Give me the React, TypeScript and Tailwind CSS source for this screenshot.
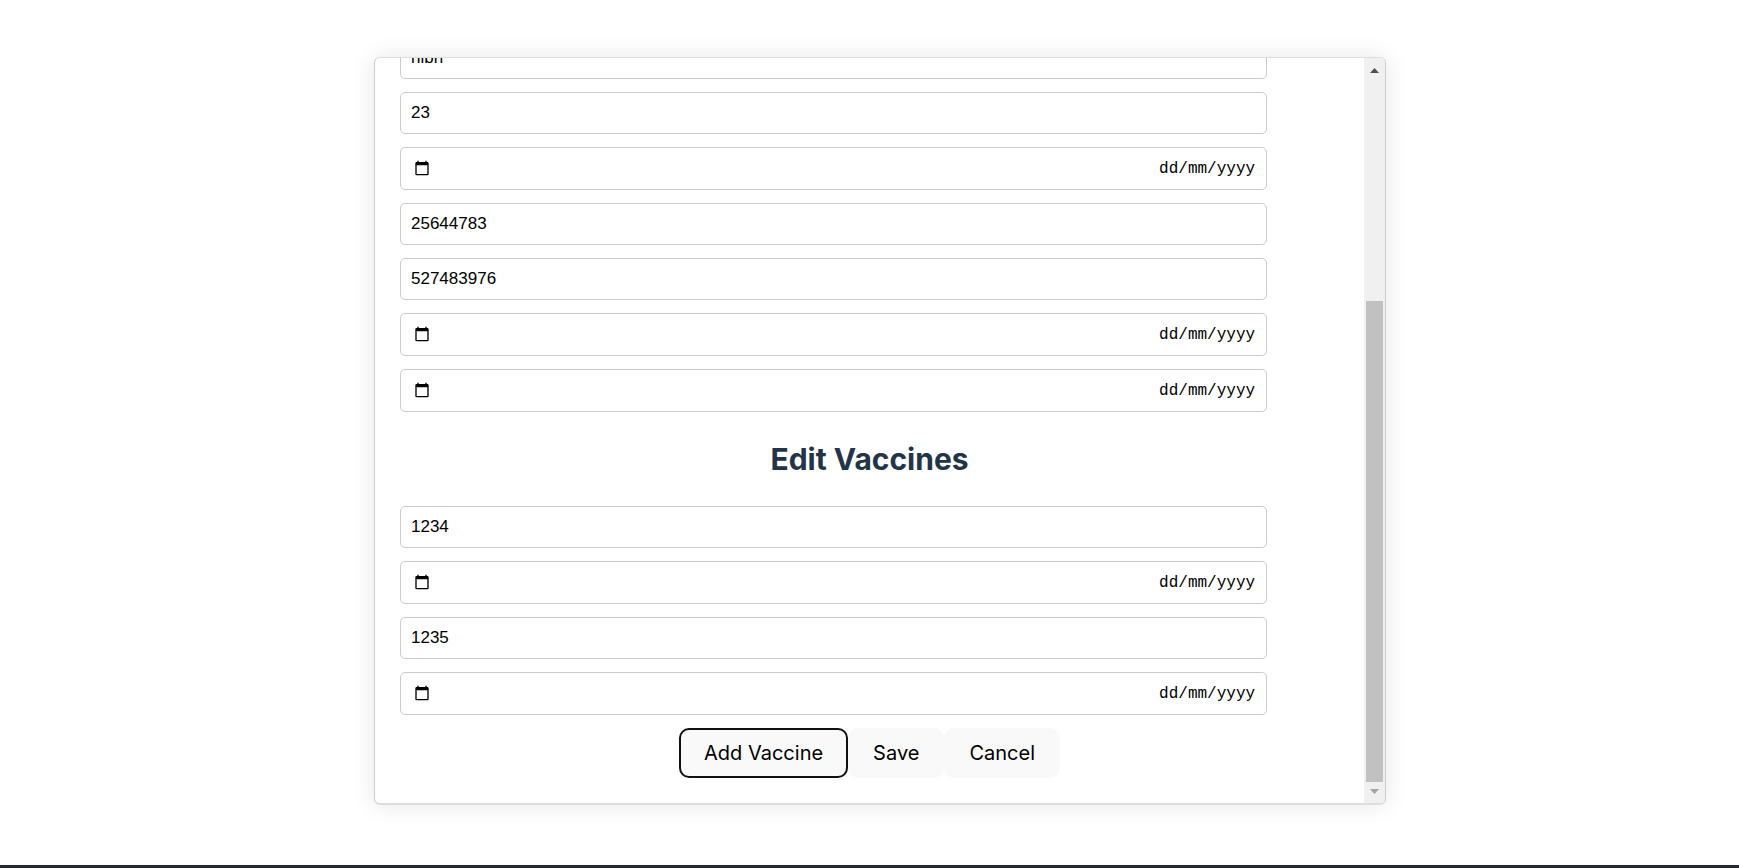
type Field = { label: string; kind: "text" | "date"; value?: string };

const patientFields: Field[] = [
  { label: "Street", kind: "text", value: "nibh" },
  { label: "House number", kind: "text", value: "23" },
  { label: "Birth date", kind: "date" },
  { label: "Phone", kind: "text", value: "25644783" },
  { label: "Mobile phone", kind: "text", value: "527483976" },
  { label: "Positive test date", kind: "date" },
  { label: "Recovery date", kind: "date" },
];

const vaccineFields: Field[] = [
  { label: "First vaccine code", kind: "text", value: "1234" },
  { label: "First vaccine date", kind: "date" },
  { label: "Second vaccine code", kind: "text", value: "1235" },
  { label: "Second vaccine date", kind: "date" },
];

function CalendarIcon() {
  return (
    <svg width="16" height="16" viewBox="0 0 24 24" fill="currentColor" aria-hidden="true">
      <path d="M20 3h-1V1h-2v2H7V1H5v2H4c-1.1 0-2 .9-2 2v16c0 1.1.9 2 2 2h16c1.1 0 2-.9 2-2V5c0-1.1-.9-2-2-2zm0 18H4V8h16v13z" />
    </svg>
  );
}

function FormField({ field }: { field: Field }) {
  if (field.kind === "text") {
    return (
      <input
        type="text"
        aria-label={field.label}
        defaultValue={field.value}
        className="h-[42px] w-[calc(90%+22px)] shrink-0 rounded-[5px] border border-[#ccc] bg-white px-[10px] font-['Liberation_Sans',Arial,sans-serif] text-[17px] text-black"
      />
    );
  }
  return (
    <div className="flex h-[43px] w-[calc(90%+22px)] shrink-0 items-center rounded-[5px] border border-[#ccc] bg-white pl-[13px] pr-[11px] text-black">
      <button type="button" aria-label={`Open calendar: ${field.label}`} className="shrink-0 pb-[2px]">
        <CalendarIcon />
      </button>
      <input
        type="text"
        aria-label={field.label}
        placeholder="dd/mm/yyyy"
        className="min-w-0 flex-1 bg-transparent text-right font-['Liberation_Mono',monospace] text-[16px] text-black outline-none placeholder:text-black"
      />
    </div>
  );
}

function ScrollBar() {
  return (
    <div className="flex w-[21px] shrink-0 flex-col bg-[#f0f0f0]" aria-hidden="true">
      <div className="flex h-[21px] shrink-0 items-end justify-center pb-[6px] text-[#505050]">
        <svg width="9" height="5" viewBox="0 0 9 5" fill="currentColor">
          <path d="M0 5 4.5 0 9 5z" />
        </svg>
      </div>
      <div className="flex min-h-0 flex-1 flex-col justify-end px-[2px]">
        <div className="h-[68.4%] bg-[#c1c1c1]" />
      </div>
      <div className="flex h-[21px] shrink-0 items-start justify-center pt-[7px] text-[#a3a3a3]">
        <svg width="9" height="5" viewBox="0 0 9 5" fill="currentColor">
          <path d="M0 0h9L4.5 5z" />
        </svg>
      </div>
    </div>
  );
}

const buttonBase = "h-[50px] rounded-[10px] border-2 bg-[#f9f9f9] px-[23px] text-[20px] leading-[24px] text-black";

export default function App() {
  return (
    <div className="flex h-screen flex-col bg-white font-['Inter',sans-serif]">
      <main className="flex min-h-0 flex-1 justify-center px-5 pt-[57px]">
        <div className="ml-[21px] flex h-[748px] max-h-full w-full max-w-[1012px] overflow-hidden rounded-[6px] border border-b-2 border-[#ccc] border-y-[#ddd] bg-white shadow-[0_0_25px_rgba(0,0,0,0.1)]">
          <div className="flex min-w-0 flex-1 flex-col-reverse overflow-y-auto [scrollbar-width:none]">
            <form className="flex flex-col gap-[13px] px-[25px] pb-[25px]">
              {patientFields.map((f) => (
                <FormField key={f.label} field={f} />
              ))}
              <h2 className="my-3 text-center text-[30px] font-bold leading-[44px] text-[#213547]">Edit Vaccines</h2>
              {vaccineFields.map((f) => (
                <FormField key={f.label} field={f} />
              ))}
              <div className="flex justify-center">
                <button type="button" className={`${buttonBase} border-[#101010]`}>
                  Add Vaccine
                </button>
                <button type="button" className={`${buttonBase} border-transparent`}>
                  Save
                </button>
                <button type="button" className={`${buttonBase} border-transparent`}>
                  Cancel
                </button>
              </div>
            </form>
          </div>
          <ScrollBar />
        </div>
      </main>
      <footer className="h-[3px] shrink-0 bg-[#24272b]" />
    </div>
  );
}
